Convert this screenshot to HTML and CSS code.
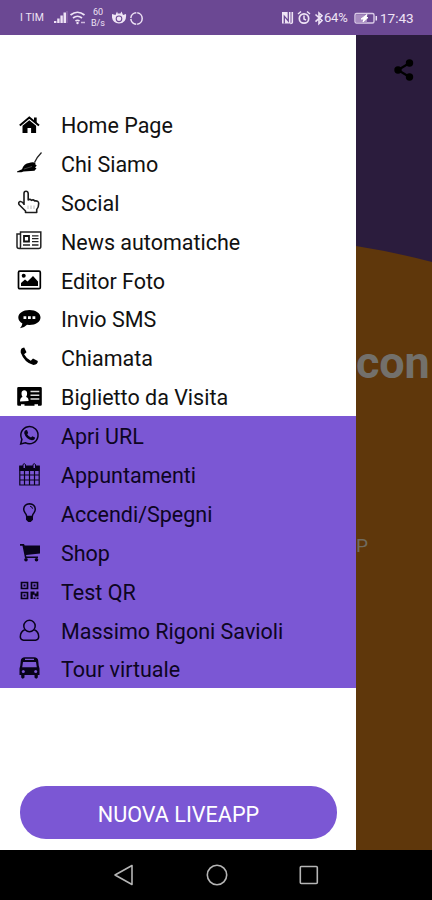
FILE: index.html
```
<!DOCTYPE html>
<html lang="it">
<head>
<meta charset="utf-8">
<meta name="viewport" content="width=device-width, initial-scale=1">
<title>LiveApp</title>
<link rel="stylesheet" href="styles.css">
</head>
<body>
<div class="phone">
  <header class="status">
    <span class="carrier">I TIM</span>
    <svg class="signals" width="43" height="20" viewBox="0 0 43 20">
      <path d="M1 15h2.400v-2H1zM4.200 15h2.400v-4.500H4.200zM7.400 15h2.400V7.500H7.400zM10.500 15h2.500V4.500h-2.500z" fill="#eee3f5"/>
      <path d="M14 15V3" stroke="#8b68a9" stroke-width="1.500"/>
      <g fill="none" stroke="#eee3f5" stroke-width="1.700"><path d="M17.500 7q7-5.500 14 0M20 10q4.500-3.500 9 0M22.500 13q2-1.500 4 0"/></g>
      <circle cx="24.500" cy="15" r="1.200" fill="#eee3f5"/><path d="M28 14.500h4" stroke="#cdb7dc" stroke-width="1.500"/>
    </svg>
    <span class="speed"><span>60</span><span>B/s</span></span>
    <svg class="extras" width="32" height="20" viewBox="0 0 32 20">
      <path d="M0 6l3.500 1L5 3.500 6 6l1-1 1 1 1.500-2.500L11 7l3-1q1 9-7 9.500Q-1 15 0 6z" fill="#eee3f5"/>
      <circle cx="7" cy="10.800" r="2.800" fill="none" stroke="#6b4893" stroke-width="1.100"/>
      <circle cx="24.500" cy="10.500" r="5.700" fill="none" stroke="#eee3f5" stroke-width="1.500" stroke-dasharray="8 1"/>
    </svg>
    <svg class="radios" width="44" height="20" viewBox="0 0 44 20">
      <path d="M2 4h8.500v11.500H2z" fill="#eee3f5"/><path d="M4.300 15.500V8.200l4 4.800V4" fill="none" stroke="#6b4893" stroke-width="1.300"/><path d="M12.300 4v10.500q0 1-2 1" fill="none" stroke="#eee3f5" stroke-width="1.600"/>
      <circle cx="24" cy="10.500" r="4.700" fill="none" stroke="#eee3f5" stroke-width="1.700"/><path d="M18 6l3-2.500M30 6l-3-2.500M24 7.500V11l2 1.200" fill="none" stroke="#eee3f5" stroke-width="1.500"/>
      <path d="M35.500 6.500l6.500 6-3 3V5l3 2.700-6.500 6" fill="none" stroke="#eee3f5" stroke-width="1.600"/>
    </svg>
    <span class="percent">64%</span>
    <svg class="battery" width="24" height="20" viewBox="0 0 24 20">
      <rect x="1" y="5.500" width="19" height="9.500" rx="1.500" fill="none" stroke="#d9c9e6" stroke-width="1.400"/>
      <path d="M2 6.500h11v8H2z" fill="#a78bc0"/><path d="M13 6.500L7 11h3l-1 3 5-4.500h-2z" fill="#fff" stroke="#fff"/><path d="M22.300 8v4.500" stroke="#eee3f5" stroke-width="1.500"/>
    </svg>
    <span class="clock">17:43</span>
  </header>

  <main class="screen">
    <aside class="drawer">
      <nav class="menu">
        <a class="item"><svg viewBox="0 0 26 26"><path d="M3.800 14.500L13.300 6.500 23 14.500" fill="none" stroke="#000" stroke-width="2"/><path d="M6.500 14.700l6.800-5.500 6.800 5.500V22h-5v-5h-3.600v5h-5zM18 6.500h2.700v6L18 10z"/></svg><span>Home Page</span></a>
        <a class="item"><svg viewBox="0 0 26 26"><path d="M1 21.500l5-2.200C7 15.500 10 13.300 13 13c2-1 5-1 6.500-.2-.5 1.500 0 2.200 1.300 2.700L19 17.500l1.500.7-2 2.500-11 .8q-3 1.200-6.500.7z"/><path d="M18.500 12.500Q21 7 25.500 2.500" fill="none" stroke="#222" stroke-width="1.300"/><path d="M8 19l8-2.500" stroke="#888" stroke-width=".5"/></svg><span>Chi Siamo</span></a>
        <a class="item"><svg viewBox="0 0 26 26"><path d="M8 16V4.500q0-2.200 2-2.200t2.200 2.200V11q1.700-1.400 3.300.3 1.800-1.200 3.200.6 4-.5 4 2.600 0 4-2 6V23.500H9.500V22L3 15.500q-.9-2.300 1-3Q6 12.200 8 15" fill="none" stroke="#1c1c1c" stroke-width="1.600" stroke-linejoin="round"/><path d="M12 16.500V20M15 16.500V20M18 16.500V20" stroke="#aaa" stroke-width=".8"/></svg><span>Social</span></a>
        <a class="item"><svg viewBox="0 0 26 26"><path d="M4.500 4h20.300v14.500q0 2-2 2H3.300q-2.300 0-2.300-2V6h3.500zM4.500 6v12.500q0 2-1.200 2" fill="none" stroke="#222" stroke-width="1.500"/><path d="M8 8h5v5.500H8z" fill="none" stroke="#111" stroke-width="1.800"/><path d="M16 7.800h6.500M16 10.700h6.500M16 13.600h6.500M7 17h7M16 17h6.500" stroke="#222" stroke-width="1.300"/></svg><span>News automatiche</span></a>
        <a class="item"><svg viewBox="0 0 26 26"><rect x="2.500" y="4.200" width="21.800" height="17.500" rx="1.200" fill="none" stroke="#000" stroke-width="1.700"/><circle cx="7.700" cy="8.800" r="2"/><path d="M5 19v-3l4-3.500 2.500 2L17 9l5 5.500V19z"/></svg><span>Editor Foto</span></a>
        <a class="item"><svg viewBox="0 0 26 26"><path d="M13.400 5C20 5 24.500 8.300 24.500 12.500S20 20 13.400 20l-2.400-.2Q8 23 4 23.300q2-2 2.400-4.800Q2.300 16 2.300 12.500C2.300 8.300 7 5 13.400 5z"/><path d="M7.500 11.200h2.800V14H7.500zM12 11.200h2.800V14H12zM16.500 11.200h2.800V14h-2.800z" fill="#fff"/></svg><span>Invio SMS</span></a>
        <a class="item"><svg viewBox="0 0 26 26"><path d="M8.200 3.500l2.300 4.700-2.400 2q2 4 6.700 6.500l2.200-2.300 4.800 2.600q.2 3.600-4.300 4-9-2-12.800-12.500-.5-4.800 3.500-5z"/></svg><span>Chiamata</span></a>
        <a class="item"><svg viewBox="0 0 26 26"><path d="M2.500 4h22q1.300 0 1.300 1.300v16.200q0 1.200-1.300 1.200H22v-1.500h-3.500v1.500h-10v-1.500H5v1.500H2.500q-1.300 0-1.300-1.200V5.300Q1.200 4 2.500 4z"/><path d="M4 18.500q0-4 2.500-4.500-1.200-1.500-1-4 .3-2.700 2.800-2.700t2.800 2.700q.2 2.500-1 4 2.500.5 2.500 4z" fill="#fff"/><path d="M14.500 8.500h8.800M14.500 12.200h8.800M14.500 16h8.800" stroke="#ddd" stroke-width="1.500"/></svg><span>Biglietto da Visita</span></a>
        <div class="group">
          <a class="item"><svg viewBox="0 0 26 26"><path d="M4.700 22l1.200-4.700A8.600 8.600 0 1 1 9.300 20.700z" fill="none" stroke="#08031a" stroke-width="1.500"/><path d="M9.500 8.300l1.500-.2 1.200 2.800-1 1.400q1.300 2.500 3.800 3.300l1.300-1.400 2.700 1.400q0 2.700-3 2.700-6-1-7.800-7-.2-2 1.300-3z"/></svg><span>Apri URL</span></a>
          <a class="item"><svg viewBox="0 0 26 26"><path d="M3.800 5h19.400v19H3.800zM3.800 14h19.400M3.800 19h19.400M8.500 9v15M13.500 9v15M18.500 9v15" fill="none" stroke="#08031a" stroke-width="1.200"/><path d="M3.500 5h20v5h-20z"/><path d="M7 7.500v-4q1.200-1.700 2.500 0v4zM17 7.500v-4q1.200-1.700 2.500 0v4z" fill="#7b57d4" stroke="#08031a" stroke-width="1"/></svg><span>Appuntamenti</span></a>
          <a class="item"><svg viewBox="0 0 26 26"><path d="M10.700 16.500q-.2-2.300-1.700-3.800Q7.700 11 7.700 9q.4-5 5.800-5.300Q18.900 4 19.300 9q0 2-1.300 3.700-1.500 1.500-1.700 3.800z" fill="none" stroke="#08031a" stroke-width="1.500"/><path d="M10 16h7v3.700l-2.300 2.200h-2.400L10 19.700z"/><path d="M14 6.200q2.300.3 2.500 2.500" fill="none" stroke="#08031a"/></svg><span>Accendi/Spegni</span></a>
          <a class="item"><svg viewBox="0 0 26 26"><path d="M4 5h4l.7 1.500H24V14.500L10 16l.4 1.500H22V19H9L6.500 6.700H4z"/><circle cx="10" cy="20.800" r="1.800"/><circle cx="20.500" cy="20.800" r="1.800"/></svg><span>Shop</span></a>
          <a class="item"><svg viewBox="0 0 26 26"><path d="M5.500 4.500h6v6h-6zM15.500 4.500h6v6h-6zM5.500 14.500h6v6h-6z" fill="none" stroke="#08031a" stroke-width="1.700"/><path d="M7.500 6.500h2v2h-2zM17.500 6.500h2v2h-2zM7.500 16.500h2v2h-2zM14.500 13.500h4v2h2v-2h2v5h-3.800v-1.700h-1.900V21h-2.300zM17.500 19.500h2V21h-2zM20.700 19.500h1.800V21h-1.800z"/></svg><span>Test QR</span></a>
          <a class="item"><svg viewBox="0 0 26 26"><circle cx="13.500" cy="9" r="5.700" fill="none" stroke="#08031a" stroke-width="1.500"/><path d="M8.700 12.800Q4.300 14.500 4.300 20q.2 3 3.200 3.200h12q3-.2 3.200-3.200 0-5.500-4.400-7.200" fill="none" stroke="#08031a" stroke-width="1.500"/></svg><span>Massimo Rigoni Savioli</span></a>
          <a class="item"><svg viewBox="0 0 26 26"><path d="M9 2.200h9q4 .3 4.200 3.300l.5 5 .8 3V20h-1.700v2.500q-1.500 2.300-3.300 0V20h-10v2.500q-1.800 2.300-3.300 0V20H3.500v-6.500l.8-3 .5-5Q5 2.500 9 2.200z"/><path d="M7 7h13l.8 5.200H6.200zM9 3.800h9V5H9z" fill="#7b57d4"/><circle cx="7.300" cy="16.500" r="1.500" fill="#7b57d4"/><circle cx="19.700" cy="16.500" r="1.500" fill="#7b57d4"/></svg><span>Tour virtuale</span></a>
        </div>
      </nav>
      <button class="create" type="button">NUOVA LIVEAPP</button>
    </aside>
    <section class="backdrop">
      <svg class="wave" width="76" height="30" viewBox="0 0 76 30"><path d="M0 11Q38 17 76 27V30H0z" fill="#5f370b"/></svg>
      <svg class="share" width="22" height="24" viewBox="0 0 22 24"><path d="M16.500 5L5 12l11.500 7" fill="none" stroke="#000" stroke-width="2.200"/><circle cx="16.500" cy="5" r="3.700"/><circle cx="5" cy="12" r="3.700"/><circle cx="16.500" cy="19" r="3.700"/></svg>
      <div class="headline">con</div>
      <div class="caption">P</div>
    </section>
  </main>

  <footer class="navbar">
    <svg viewBox="0 0 26 26"><path d="M20 3.500v19L3 13z"/></svg>
    <svg viewBox="0 0 26 26"><circle cx="13" cy="13" r="9.700"/></svg>
    <svg viewBox="0 0 26 26"><rect x="4.300" y="4.500" width="17" height="17" rx="1"/></svg>
  </footer>
</div>
</body>
</html>
```
FILE: styles.css
```
* { box-sizing: border-box; }
body { margin: 0; font-family: Roboto, "Liberation Sans", sans-serif; }
svg { display: block; flex: none; }
.phone { width: 432px; height: 900px; display: flex; flex-direction: column; overflow: hidden; background: #000; }

.status { height: 34.5px; flex: none; display: flex; align-items: center; padding: 1px 0 0 20px; background: #6b4893; color: #eee3f5; white-space: nowrap; }
.carrier { width: 33px; font-size: 10.5px; letter-spacing: .1px; }
.speed { width: 16px; margin-left: -8px; display: flex; flex-direction: column; text-align: center; font-size: 9px; line-height: 11px; }
.signals { margin-right: 2px; }
.extras { margin-left: 6px; }
.radios { margin-left: auto; }
.percent { width: 30px; font-size: 13px; letter-spacing: -.2px; }
.battery { margin-right: 2px; }
.clock { width: 52px; font-size: 13.5px; }

.screen { flex: 1; min-height: 0; display: flex; }
.drawer { width: 356px; flex: none; background: #fff; padding-top: 70px; display: flex; flex-direction: column; }
.item { height: 38.9px; display: flex; align-items: center; padding-left: 16px; font-size: 21.5px; color: #111; white-space: nowrap; }
.item svg { width: 26px; height: 26px; margin-right: 19px; }
.item span { padding-top: 3px; }
.group { background: #7b57d4; }
.group .item { color: #0d0522; }
.group svg { fill: #08031a; }
.create { margin: auto 19px 10.5px 20px; height: 53px; flex: none; border: 0; border-radius: 26px; background: #7b57d4; color: #fff; font: 21.6px Roboto, sans-serif; padding: 3px 0 0; }

.backdrop { flex: 1; min-width: 0; position: relative; overflow: hidden; display: flex; flex-direction: column; background: linear-gradient(#2b1c3d 0 229px, #5f370b 229px); }
.wave { margin-top: 200px; }
.share { position: absolute; left: 37px; top: 23px; }
.headline { margin: 71px 0 0; font-size: 45px; line-height: 54px; font-weight: 700; letter-spacing: -.2px; color: #73706b; }
.caption { margin-top: 144px; font-size: 19px; line-height: 24px; color: #706b5f; }

.navbar { height: 50.5px; flex: none; display: flex; justify-content: space-between; padding: 12px 110.5px 0 111.5px; background: #000; }
.navbar svg { width: 26px; height: 26px; fill: none; stroke: #b5b5b5; stroke-width: 1.6; stroke-linejoin: round; }
```
